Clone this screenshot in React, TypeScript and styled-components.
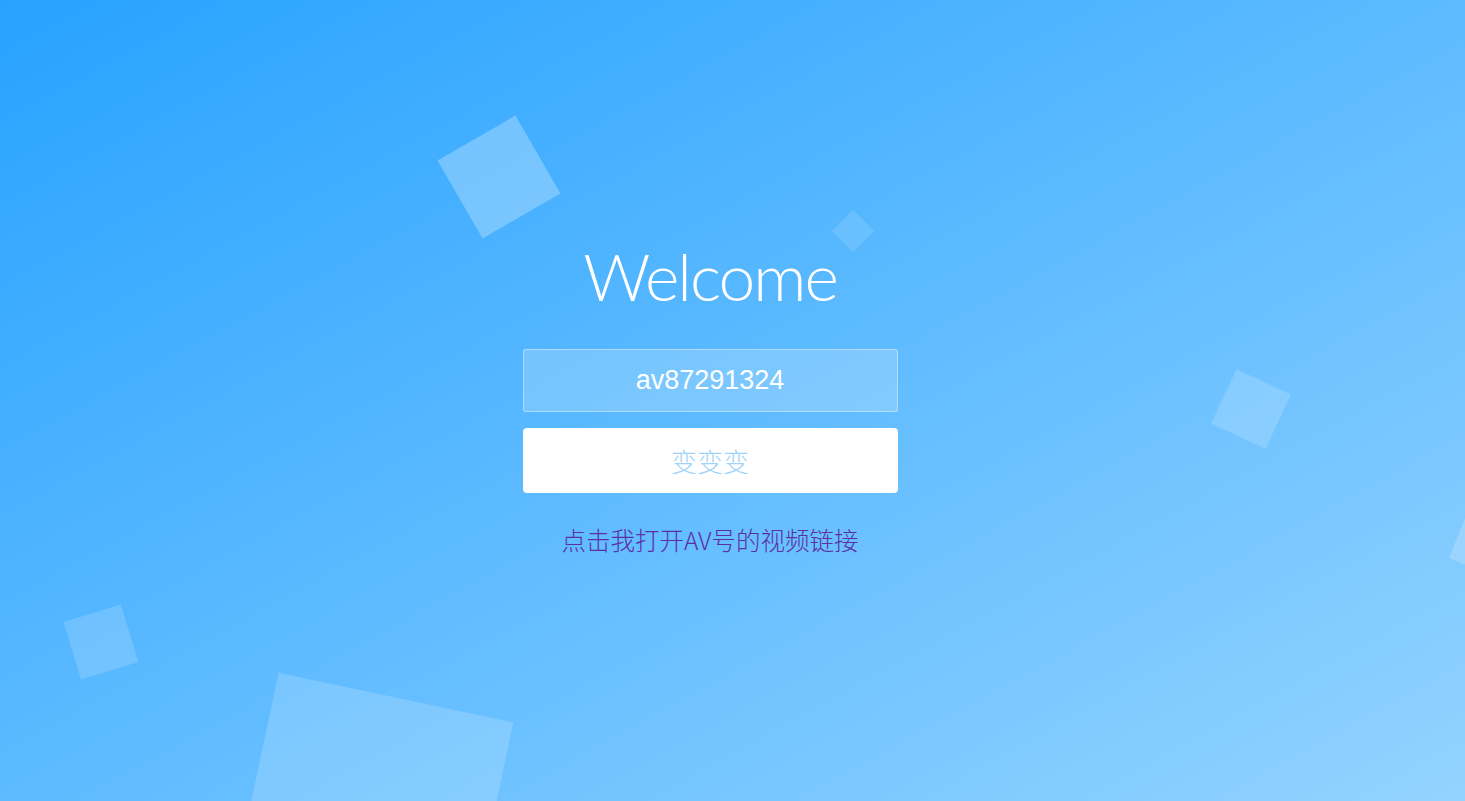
import React from "react";
import styled, { createGlobalStyle } from "styled-components";

const GlobalStyle = createGlobalStyle`
  html, body {
    margin: 0;
    padding: 0;
    width: 100%;
    height: 100%;
    overflow: hidden;
  }
  #root {
    height: 100%;
  }
  * {
    box-sizing: border-box;
  }
`;

const Page = styled.div`
  position: relative;
  width: 100%;
  height: 801px;
  overflow: hidden;
  background: linear-gradient(to bottom right, #27a2ff 0%, #93d3ff 100%);
  display: flex;
  justify-content: center;
  padding-right: 45px;
  font-family: "Liberation Sans", Arial, sans-serif;
`;

const Square = styled.div<{
  $x: number;
  $y: number;
  $size: number;
  $rot: number;
  $alpha: number;
}>`
  position: absolute;
  left: ${(p) => p.$x - p.$size / 2}px;
  top: ${(p) => p.$y - p.$size / 2}px;
  width: ${(p) => p.$size}px;
  height: ${(p) => p.$size}px;
  background: rgba(255, 255, 255, ${(p) => p.$alpha});
  transform: rotate(${(p) => p.$rot}deg);
`;

const Form = styled.div`
  position: relative;
  z-index: 1;
  display: flex;
  flex-direction: column;
  align-items: center;
  padding-top: 236px;
  width: 375px;
`;

const Title = styled.h1`
  margin: 0;
  font-family: Lato, "Open Sans", sans-serif;
  font-weight: 300;
  font-size: 66px;
  line-height: 80px;
  letter-spacing: -2px;
  color: #ffffff;
  white-space: nowrap;
`;

const Input = styled.input`
  margin-top: 33px;
  width: 375px;
  height: 63px;
  border: 1px solid rgba(255, 255, 255, 0.4);
  border-radius: 3px;
  background: rgba(255, 255, 255, 0.2);
  color: #ffffff;
  text-align: center;
  font-family: "Liberation Sans", Arial, sans-serif;
  font-size: 27px;
  outline: none;
  padding: 0 15px;
`;

const Button = styled.button`
  margin-top: 16px;
  width: 375px;
  height: 65px;
  border: none;
  border-radius: 4px;
  background: #ffffff;
  color: #9fd3fa;
  font-family: "Noto Sans CJK SC", sans-serif;
  font-weight: 300;
  font-size: 26px;
  cursor: pointer;
`;

const Link = styled.a`
  margin-top: 31px;
  font-family: "Noto Sans CJK SC", sans-serif;
  font-weight: 300;
  font-size: 24.5px;
  line-height: 32px;
  color: #5b30a6;
  text-decoration: none;
  white-space: nowrap;
`;

const squares = [
  { x: 499, y: 177, size: 90, rot: -30, alpha: 0.27 },
  { x: 853, y: 231, size: 30, rot: 45, alpha: 0.12 },
  { x: 1251, y: 409, size: 60, rot: 25, alpha: 0.17 },
  { x: 1501, y: 536, size: 80, rot: 22, alpha: 0.2 },
  { x: 101, y: 642, size: 60, rot: -17, alpha: 0.16 },
  { x: 371, y: 815, size: 240, rot: 12, alpha: 0.17 },
];

export default function App() {
  return (
    <>
      <GlobalStyle />
      <Page>
        {squares.map((s, i) => (
          <Square
            key={i}
            $x={s.x}
            $y={s.y}
            $size={s.size}
            $rot={s.rot}
            $alpha={s.alpha}
          />
        ))}
        <Form>
          <Title>Welcome</Title>
          <Input defaultValue="av87291324" />
          <Button>变变变</Button>
          <Link href="#">点击我打开AV号的视频链接</Link>
        </Form>
      </Page>
    </>
  );
}
